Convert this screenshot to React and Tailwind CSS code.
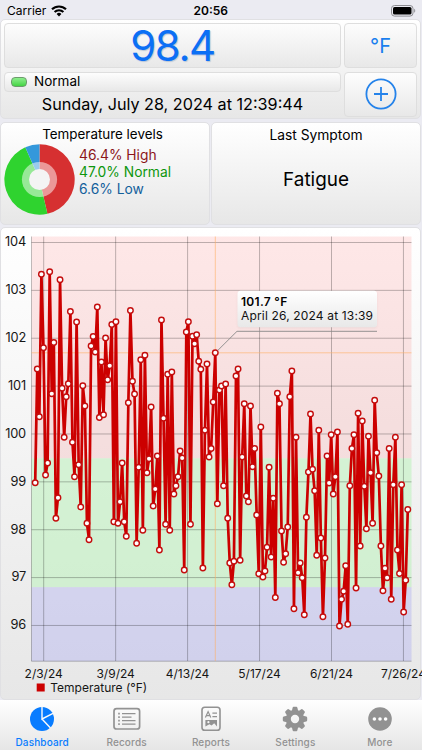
import { useState } from "react";

// daily readings, already in chart pixels (top of the chart svg is y = 230)
const READINGS = [
  482.7, 369, 416.7, 274.3, 347.7, 475, 463, 271.7, 393.7, 342.5, 518.3, 497.7, 279.7, 388.3, 437.3, 396.7, 383.7, 311.5, 442.3, 476.8,
  322, 464.7, 507, 385.7, 406, 523.3, 539.7, 346, 336.5, 352, 307, 417.5, 362, 414.7, 338, 379.7, 365.7, 324.5, 521.7, 321.7,
  523.3, 501.7, 463, 521.7, 536.3, 402.7, 310.5, 381.3, 394, 543.3, 467.3, 359.7, 530.3, 355.3, 472.7, 458.7, 407, 506, 489, 456,
  550, 320, 418.3, 524.3, 374.3, 530.3, 372, 494, 485.7, 476.7, 451, 458, 570, 332, 321.7, 524.3, 336.3, 343.7, 334.7, 361.3,
  369.3, 568, 430.3, 364, 457, 448.5, 402, 352.8, 503.7, 390, 386, 485.7, 384, 518.3, 563, 584.7, 561.3, 376, 369, 560.3,
  457, 403.7, 496, 501.7, 406, 466.7, 448.5, 515, 573.7, 427, 577, 571, 547.3, 467.3, 557, 498.3, 597.5, 393.3, 403.7, 531,
  562.3, 553.7, 527, 396.7, 371, 608.7, 437.3, 572.7, 563, 577.7, 614.7, 517.3, 472, 414, 469.3, 490.7, 555.3, 430.3, 538, 616.7,
  558, 456, 483, 434.7, 494, 476.7, 432, 626, 599.3, 591.3, 565.7, 624.3, 485.7, 448.5, 434.7, 588, 413.3, 546, 421, 486.3,
  528.7, 436.3, 472.7, 523.3, 400.3, 452.7, 476, 546, 590.7, 568.3, 577.7, 448.5, 599.3, 484.7, 437.3, 550, 573.5, 484.7, 612, 580.3,
  509.5,
];

const points = READINGS.map((y, i) => ({ x: 35.2 + i * 2.07, y }));

const DEGREES = [104, 103, 102, 101, 100, 99, 98, 97, 96];
const DATES = ["2/3/24", "3/9/24", "4/13/24", "5/17/24", "6/21/24", "7/26/24"];

const levels = [
  { text: "46.4% High", color: "text-[#8b1518]" },
  { text: "47.0% Normal", color: "text-[#0d960d]" },
  { text: "6.6% Low", color: "text-[#13609c]" },
];

const panel = "rounded-[5px] border border-[#e0e0e3] bg-linear-to-b from-white to-[#e7e7e7]";
const box = "rounded-[4px] border border-[#dedede] bg-linear-to-b from-[#fdfdfd] to-[#e8e8e8]";

function StatusBar() {
  return (
    <div className="relative flex h-[19px] items-center justify-between pl-[7px] pr-[6px] pt-[3px] text-[12px] text-black">
      <div className="flex items-center gap-[5px]">
        <span>Carrier</span>
        <svg width="16" height="12" viewBox="0 0 16 12" fill="none" stroke="#000" strokeWidth="2.1">
          <path d="M1 4.3a10 10 0 0 1 14 0" />
          <path d="M3.6 7.1a6.2 6.2 0 0 1 8.8 0" />
          <path d="M8 11.4L5.6 9a3.4 3.4 0 0 1 4.8 0z" fill="#000" stroke="none" />
        </svg>
      </div>
      <span className="absolute left-[193.5px] font-semibold">20:56</span>
      <svg width="25" height="12" viewBox="0 0 25 12">
        <rect x="0.5" y="0.5" width="21.5" height="10.6" rx="3" fill="none" stroke="#8d8d92" />
        <rect x="2" y="2" width="18.5" height="7.6" rx="1.6" fill="#000" />
        <path d="M23.2 3.8c1.4.5 1.4 3.4 0 4z" fill="#8d8d92" />
      </svg>
    </div>
  );
}

function Donut() {
  return (
    <svg width="72" height="72" viewBox="-35.5 -35.5 72 72" className="shrink-0">
      <path d="M0 0V-35.2A35.2 35.2 0 0 1 7.9 34.3Z" fill="#d63031" />
      <path d="M0 0L7.9 34.3A35.2 35.2 0 0 1 -14.2 -32.2Z" fill="#2fd32f" />
      <path d="M0 0L-14.2 -32.2A35.2 35.2 0 0 1 0 -35.2Z" fill="#3498db" />
      <circle r="17.6" fill="#fff" fillOpacity="0.5" />
      <circle r="10.5" fill="#f4f4f4" />
    </svg>
  );
}

function Chart() {
  return (
    <svg width="422" height="469" viewBox="0 230 422 469" className="block text-[12.8px]">
      <defs>
        <linearGradient id="tip" x1="0" y1="0" x2="0" y2="1">
          <stop offset="0" stopColor="#fff" />
          <stop offset="1" stopColor="#e8e8e8" />
        </linearGradient>
      </defs>
      <rect x="31.5" y="236.5" width="380" height="221.8" fill="#ff0000" fillOpacity="0.09" />
      <rect x="31.5" y="458.3" width="380" height="128.9" fill="#b9f2b9" fillOpacity="0.52" />
      <rect x="31.5" y="587.2" width="380" height="74" fill="#b9b9ef" fillOpacity="0.5" />

      {DEGREES.map((d, i) => (
        <g key={d}>
          <path d={`M31.5 ${242.5 + i * 47.87}H411.5`} stroke="#000" strokeOpacity="0.33" strokeWidth="0.8" />
          <text x="26" y={246.3 + i * 47.87} textAnchor="end" fill="#161616" letterSpacing="-0.2">{d}</text>
        </g>
      ))}
      {DATES.map((d, i) => (
        <g key={d}>
          <path d={`M${43.7 + i * 71.95} 236.5V661`} stroke="#000" strokeOpacity="0.33" strokeWidth="0.8" />
          <text x={43.7 + i * 71.95} y="677.5" textAnchor="middle" fill="#161616" fontSize="12">{d}</text>
        </g>
      ))}
      <path d="M31.5 236.5V661.2H411.5" fill="none" stroke="#000" strokeOpacity="0.3" strokeWidth="0.8" />
      {/* crosshair of the selected reading */}
      <path d="M31.5 352.8H411.5M215.3 236.5V661" stroke="#ffb066" strokeOpacity="0.6" strokeWidth="1" />

      <polyline points={points.map((p) => `${p.x},${p.y}`).join(" ")} fill="none" stroke="#cc0000" strokeWidth="2.7" strokeLinejoin="round" />
      {points.map((p) => (
        <circle key={p.x} cx={p.x} cy={p.y} r="2.75" fill="#fff" stroke="#c40d0d" strokeWidth="1.4" />
      ))}

      <path d="M217.4 350.8L237 331.3H377" fill="none" stroke="#888" strokeWidth="0.9" />
      <rect x="237.5" y="290.8" width="139.5" height="36.5" rx="3" fill="url(#tip)" className="drop-shadow-xs" />
      <text x="241" y="305.5" fill="#000" fontSize="12" fontWeight="600" letterSpacing="0.3">101.7 °F</text>
      <text x="241" y="320" fill="#111" fontSize="12" letterSpacing="0.16">April 26, 2024 at 13:39</text>

      <rect x="36.7" y="683.5" width="8" height="8" fill="#cc0000" />
      <text x="50.3" y="692" fill="#161616" fontSize="12">Temperature (°F)</text>
    </svg>
  );
}

const PieIcon = () => (
  <svg width="26" height="26" viewBox="0 0 26 26">
    <circle cx="13" cy="13" r="12" fill="currentColor" />
    <path d="M13 0V13L24.5 7.2M13 13L21.5 22" fill="none" stroke="#fafafa" strokeWidth="1.4" />
  </svg>
);

const ListIcon = () => (
  <svg width="28" height="26" viewBox="0 0 28 26" fill="none" stroke="currentColor">
    <rect x="1" y="2.6" width="25.6" height="20.4" rx="2.6" strokeWidth="1.7" />
    <path d="M9 7.7h13.5M9 11.2h9.5M9 14.7h13.5M9 18.2h13.5" strokeWidth="1.2" />
    <path d="M5.2 7.7h1.6M5.2 11.2h1.6M5.2 14.7h1.6M5.2 18.2h1.6" strokeWidth="1.8" />
  </svg>
);

const ReportIcon = () => (
  <svg width="20" height="26" viewBox="0 0 20 26" fill="none" stroke="currentColor">
    <rect x="1" y="1.2" width="18" height="23" rx="2.8" strokeWidth="1.6" />
    <path d="M4.4 11.6L7.1 5.6L9.8 11.6M5.4 9.6H8.8" strokeWidth="1.2" />
    <path d="M11.4 7.2h4.6M11.4 10.6h4.6" strokeWidth="1.3" />
    <path d="M4.4 14H16V20.6L13.2 17.2L10.6 19.6L8.4 18.2L4.4 20.6Z" fill="currentColor" stroke="none" />
    <circle cx="7.4" cy="16.2" r="1.1" fill="#f6f6f6" stroke="none" />
  </svg>
);

const GearIcon = () => (
  <svg width="26" height="26" viewBox="-13 -13 26 26" fill="currentColor">
    {[0, 45, 90, 135, 180, 225, 270, 315].map((a) => (
      <path key={a} d="M-3.4 -7L-2.4 -11.3Q-2.2 -12.2 -1.3 -12.2H1.3Q2.2 -12.2 2.4 -11.3L3.4 -7Z" transform={`rotate(${a})`} />
    ))}
    <path fillRule="evenodd" d="M0 -9.2A9.2 9.2 0 1 1 0 9.2A9.2 9.2 0 1 1 0 -9.2ZM0 -4.2A4.2 4.2 0 1 0 0 4.2A4.2 4.2 0 1 0 0 -4.2Z" />
  </svg>
);

const MoreIcon = () => (
  <svg width="26" height="26" viewBox="0 0 26 26">
    <circle cx="13" cy="13" r="11.8" fill="currentColor" />
    <circle cx="7.4" cy="13" r="1.8" fill="#fff" />
    <circle cx="13" cy="13" r="1.8" fill="#fff" />
    <circle cx="18.6" cy="13" r="1.8" fill="#fff" />
  </svg>
);

const tabs = [
  { name: "Dashboard", icon: PieIcon },
  { name: "Records", icon: ListIcon },
  { name: "Reports", icon: ReportIcon },
  { name: "Settings", icon: GearIcon },
  { name: "More", icon: MoreIcon },
];

export default function App() {
  const [tab, setTab] = useState("Dashboard");

  return (
    <div className="flex h-[750px] w-[422px] flex-col overflow-hidden bg-[#ebebf2] font-[Inter,sans-serif] text-black">
      <StatusBar />

      {/* Current reading */}
      <div className={`${panel} grid h-[100px] w-[421px] grid-cols-[337px_73px] gap-x-[3px] pl-[3px] pt-[3px]`}>
        <div>
          <div className={`${box} flex h-[45px] items-center justify-center text-[42px] leading-none tracking-[-1.5px] text-[#0b6ff5] text-shadow-[1px_1px_1px_#b9c6d8]`}>
            98.4
          </div>
          <div className={`${box} mt-1 flex h-5 items-center gap-[7px] pl-[6px] text-[13.5px] leading-none`}>
            <span className="h-[10px] w-4 rounded-[4px] border border-[#6c9c6c] bg-linear-to-b from-[#8cee8c] to-[#41d541]" />
            <span>Normal</span>
          </div>
          <p className="pt-[2px] text-center text-[16.2px] leading-[20px]">Sunday, July 28, 2024 at 12:39:44</p>
        </div>
        <div>
          <button className={`${box} flex h-[45px] w-full items-center justify-center text-[20px] text-[#1a7fee]`}>°F</button>
          <button className={`${box} mt-1 flex h-[45px] w-full items-center justify-center`}>
            <svg width="34" height="34" viewBox="0 1 34 34" fill="none" stroke="#2583ea" strokeWidth="1.8">
              <circle cx="17" cy="17" r="14.6" />
              <path d="M17 10v14M10 17h14" />
            </svg>
          </button>
        </div>
      </div>

      <div className="mt-[3px] flex h-[103px] gap-px">
        <div className={`${panel} w-[210px] pl-[3px]`}>
          <h2 className="pt-px pr-[8px] text-center text-[13.4px] leading-5">Temperature levels</h2>
          <div className="flex">
            <Donut />
            <div className="pl-[3px] pt-[3px] text-[13.8px] leading-[17px]">
              {levels.map((l) => (
                <p key={l.text} className={l.color}>{l.text}</p>
              ))}
            </div>
          </div>
        </div>
        <div className={`${panel} w-[210px] text-center`}>
          <h2 className="pt-[2px] text-[13.8px] leading-5">Last Symptom</h2>
          <p className="pt-[23px] text-[18.9px] leading-6">Fatigue</p>
        </div>
      </div>

      <div className={`${panel} mt-[2px] h-[473px] w-[421px] shrink-0`}>
        <div className="-ml-px mt-[2px] w-[422px]">
          <Chart />
        </div>
      </div>

      <nav className="grid h-[50px] shrink-0 grid-cols-5 bg-linear-to-b from-white to-[#e6e6e6]">
        {tabs.map(({ name, icon: Icon }) => (
          <button
            key={name}
            onClick={() => setTab(name)}
            className={`flex flex-col items-center pt-[6px] text-[10px] font-medium leading-[20px] tracking-[0.15px] ${
              tab === name ? "text-[#087cff]" : "text-[#929292]"
            }`}
          >
            <Icon />
            {name}
          </button>
        ))}
      </nav>
    </div>
  );
}
